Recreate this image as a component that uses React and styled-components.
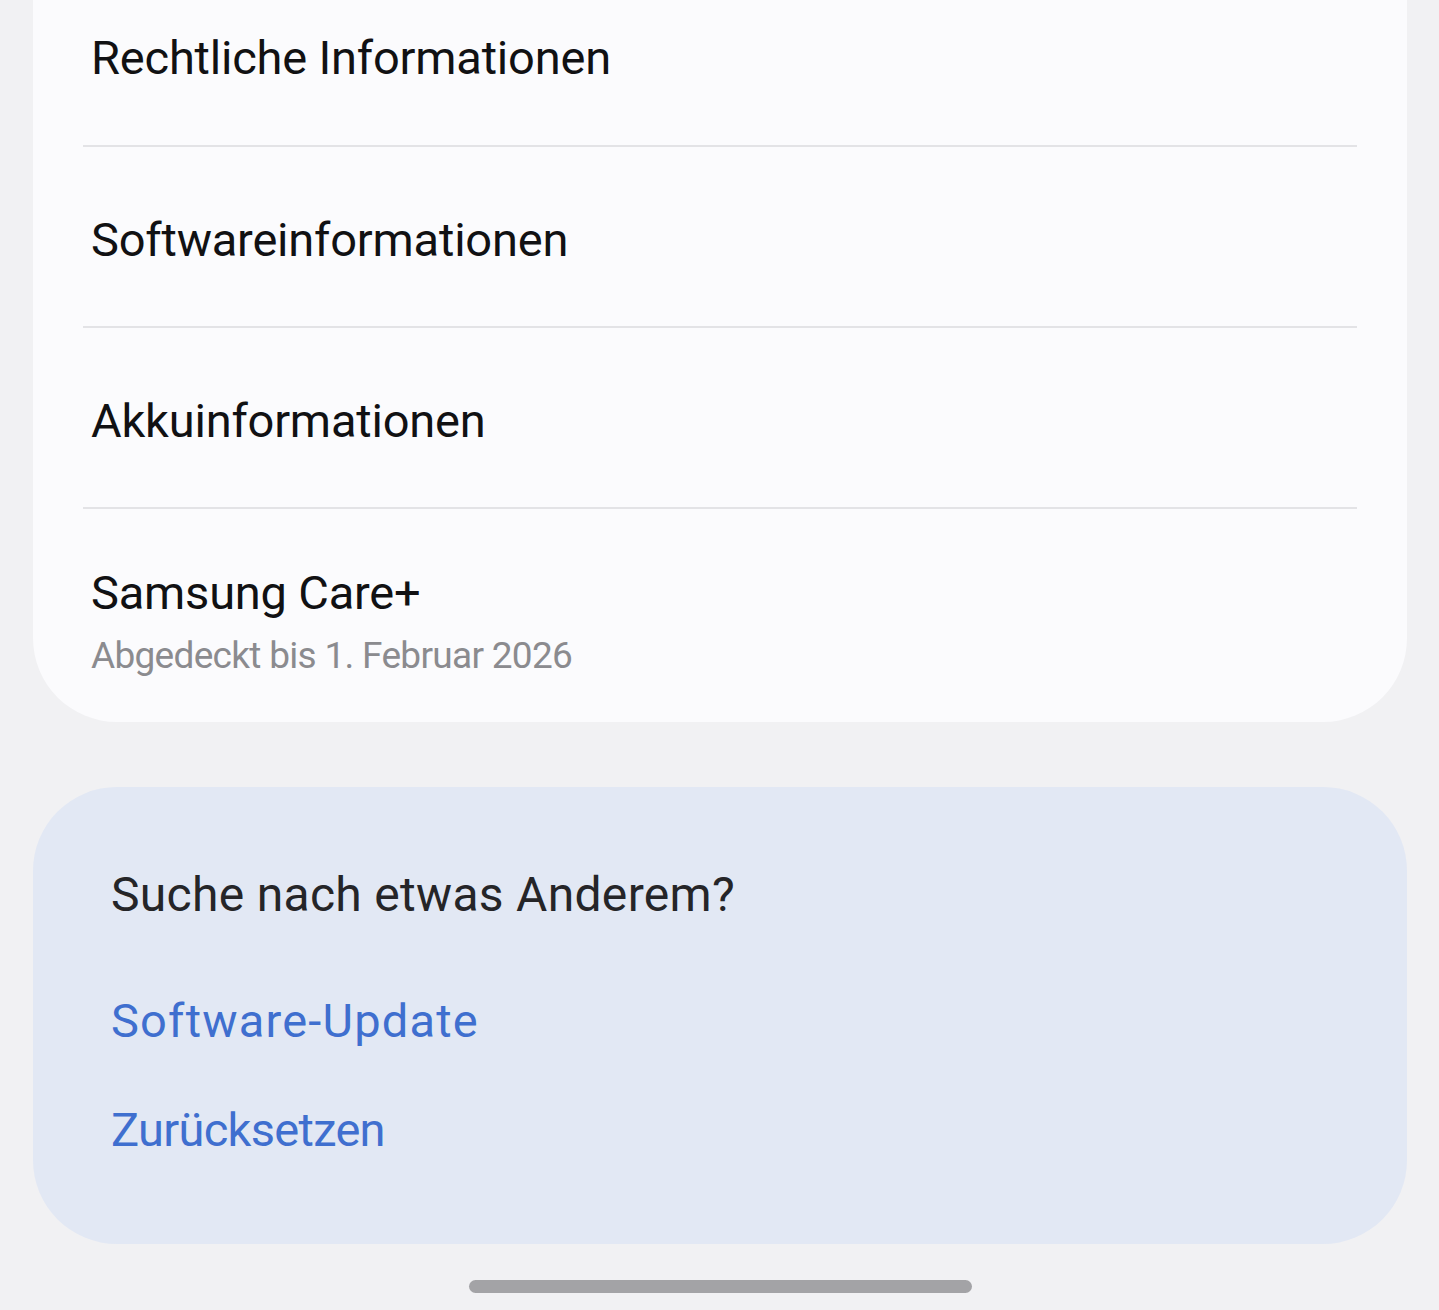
import React from 'react';
import styled, { createGlobalStyle } from 'styled-components';

const GlobalStyle = createGlobalStyle`
  html, body {
    margin: 0;
    padding: 0;
    background: #f1f1f3;
  }
  body {
    font-family: Roboto, "Liberation Sans", sans-serif;
  }
`;

const Page = styled.div`
  width: 1439px;
  height: 1310px;
  background: #f1f1f3;
  display: flex;
  flex-direction: column;
  padding: 0 32px 0 33px;
  box-sizing: border-box;
  overflow: hidden;
`;

const Card = styled.div`
  background: #fbfbfd;
  border-radius: 0 0 84px 84px;
  display: flex;
  flex-direction: column;
`;

const Row = styled.div`
  height: ${({ height }) => height}px;
  padding: ${({ shift }) => (shift > 0 ? `${shift}px 58px 0` : `0 58px ${-shift}px`)};
  display: flex;
  flex-direction: column;
  justify-content: center;
  box-sizing: border-box;
`;

const Divider = styled.div`
  height: 2px;
  margin: 0 50px;
  background: #e3e3e6;
`;

const Title = styled.div`
  font-size: 47px;
  color: #111113;
  letter-spacing: -0.2px;
  line-height: 1.2;
`;

const Subtitle = styled.div`
  font-size: 37px;
  color: #8b8b8f;
  letter-spacing: -0.7px;
  line-height: 1.2;
  margin-top: 12px;
`;

const SuggestCard = styled.div`
  margin-top: 65px;
  background: #e2e8f4;
  border-radius: 84px;
  height: 457px;
  padding: 79px 78px 0;
  box-sizing: border-box;
  display: flex;
  flex-direction: column;
  align-items: flex-start;
`;

const Heading = styled.div`
  font-size: 48px;
  color: #252528;
  letter-spacing: 0.3px;
  line-height: 1.2;
  margin-bottom: 69px;
`;

const Link = styled.a`
  font-size: 47px;
  color: #3f6fcf;
  letter-spacing: ${({ spacing }) => spacing || 0}px;
  line-height: 1.2;
  text-decoration: none;
  margin-bottom: 53px;
`;

const HomeBar = styled.div`
  align-self: center;
  width: 503px;
  height: 13px;
  border-radius: 7px;
  background: #a3a3a6;
  margin-top: 36px;
`;

const rows = [
  { title: 'Rechtliche Informationen', height: 145, shift: -28 },
  { title: 'Softwareinformationen', height: 179, shift: 8 },
  { title: 'Akkuinformationen', height: 179, shift: 8 },
];

export default function App() {
  return (
    <>
      <GlobalStyle />
      <Page>
        <Card>
          {rows.map((r) => (
            <React.Fragment key={r.title}>
              <Row height={r.height} shift={r.shift}>
                <Title>{r.title}</Title>
              </Row>
              <Divider />
            </React.Fragment>
          ))}
          <Row height={213} shift={12}>
            <Title>Samsung Care+</Title>
            <Subtitle>Abgedeckt bis 1. Februar 2026</Subtitle>
          </Row>
        </Card>
        <SuggestCard>
          <Heading>Suche nach etwas Anderem?</Heading>
          <Link href="#" spacing={1.2}>Software-Update</Link>
          <Link href="#" spacing={-0.7}>Zurücksetzen</Link>
        </SuggestCard>
        <HomeBar />
      </Page>
    </>
  );
}
